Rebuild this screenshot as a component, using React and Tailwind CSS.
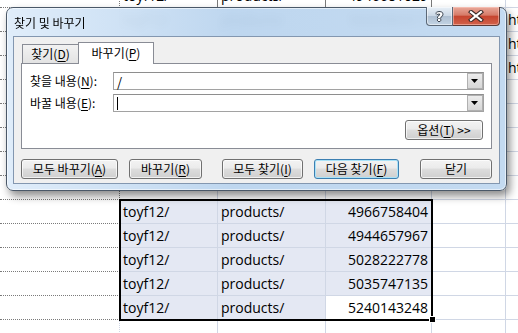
import React from 'react';

const rows = [
  { b: 'toyf12/', c: 'products/', d: '4946681029', f: '' },
  { b: 'toyf12/', c: 'products/', d: '5026384417', f: 'https://' },
  { b: 'toyf12/', c: 'products/', d: '4988125630', f: 'https://' },
  { b: 'toyf12/', c: 'products/', d: '5012774185', f: 'https://' },
  { b: '', c: '', d: '', f: '' },
  { b: '', c: '', d: '', f: '' },
  { b: '', c: '', d: '', f: '' },
  { b: '', c: '', d: '', f: '' },
  { b: '', c: '', d: '', f: '' },
  { b: 'toyf12/', c: 'products/', d: '4966758404', f: '', sel: true },
  { b: 'toyf12/', c: 'products/', d: '4944657967', f: '', sel: true },
  { b: 'toyf12/', c: 'products/', d: '5028222778', f: '', sel: true },
  { b: 'toyf12/', c: 'products/', d: '5035747135', f: '', sel: true },
  { b: 'toyf12/', c: 'products/', d: '5240143248', f: '', sel: true, last: true },
  { b: '', c: '', d: '', f: '' },
];

const U = ({ children }) => <span className="underline underline-offset-[2px]">{children}</span>;

const Btn = ({ className = '', focus, children }) => (
  <div
    className={`flex h-[20px] items-center justify-center whitespace-nowrap rounded-[3px] border bg-[linear-gradient(#f3f3f3_0%,#ebebeb_45%,#dddddd_50%,#cfcfcf_100%)] text-[12px] leading-none ${
      focus
        ? 'border-[#3c7fb1] shadow-[inset_0_0_0_1px_#a9e2f8]'
        : 'border-[#707070] shadow-[inset_0_0_0_1px_rgba(255,255,255,0.7)]'
    } ${className}`}
  >
    {children}
  </div>
);

const Combo = ({ children }) => (
  <div className="flex h-[18px] w-[371px] items-center border border-[#a2a2a2] border-t-[#8e8e8e] bg-white">
    <div className="flex-1 pl-[3px] text-[13px] leading-none">{children}</div>
    <div className="flex h-[16px] w-[16px] items-center justify-center border border-[#b0b0b0] bg-[linear-gradient(#ececec,#d6d6d6)]">
      <svg width="8" height="5" viewBox="0 0 8 5">
        <path d="M0 0 H7 L3.5 4 Z" fill="#000" />
      </svg>
    </div>
  </div>
);

export default function App() {
  return (
    <div className="relative h-[333px] w-[518px] overflow-hidden bg-white font-['Open_Sans',sans-serif] text-[14px] text-black">
      {/* spreadsheet */}
      <div className="mt-[-16px] flex flex-col">
        {rows.map((r, i) => {
          const top = i === 0;
          const above = i < 9;
          const selBg = r.sel ? 'bg-[#e4e8f3]' : 'bg-white';
          return (
            <div key={i} className="flex h-[24px] leading-[24px]">
              <div
                className={`w-[120px] shrink-0 border-b border-r border-b-[#7a7a7a] border-dotted ${
                  above ? 'border-r-[#7a7a7a]' : 'border-r-[#d0d7e5] border-r-solid'
                }`}
              />
              <div
                className={`w-[98px] shrink-0 border-b border-r border-[#d0d7e5] pl-[3px] ${selBg} ${
                  top ? 'border-r-[#7a7a7a] border-r-dotted' : ''
                }`}
              >
                {r.b}
              </div>
              <div
                className={`w-[108px] shrink-0 border-b border-r border-[#d0d7e5] pl-[3px] ${selBg} ${
                  top ? 'border-r-[#7a7a7a] border-r-dotted' : ''
                }`}
              >
                {r.c}
              </div>
              <div
                className={`w-[106px] shrink-0 border-b border-r border-[#d0d7e5] pr-[3px] text-right ${
                  r.last ? 'bg-white' : selBg
                } ${top ? 'border-r-[#7a7a7a] border-r-dotted' : ''}`}
              >
                {r.d}
              </div>
              <div className="w-[74px] shrink-0 border-b border-r border-[#d0d7e5]" />
              <div className="flex-1 overflow-hidden whitespace-nowrap border-b border-[#d0d7e5] pl-[2px]">{r.f}</div>
            </div>
          );
        })}
      </div>

      {/* selection outline + fill handle */}
      <div className="pointer-events-none absolute left-[119px] top-[199px] h-[122px] w-[314px] border-2 border-black" />
      <div className="absolute left-[430px] top-[317px] h-[5px] w-[5px] bg-black outline outline-1 outline-white" />

      {/* dialog */}
      <div className="absolute left-[6px] top-[7px] flex h-[184px] w-[501px] flex-col rounded-[7px] border border-[#4a5868] bg-[linear-gradient(90deg,rgba(222,236,250,0.94),rgba(186,212,238,0.94)_45%,rgba(192,216,240,0.94))] px-[6px] pb-[6px] font-['Noto_Sans_CJK_KR',sans-serif] shadow-[3px_5px_9px_rgba(0,0,0,0.45),inset_0_0_0_1px_rgba(255,255,255,0.55)] backdrop-blur-[4px]">
        <div className="flex h-[28px] items-start justify-between">
          <div className="self-center pl-[1px] pt-[1px] text-[12px] leading-none text-black">찾기 및 바꾸기</div>
          <div className="-mt-px flex h-[19px]">
            <div className="flex w-[27px] items-center justify-center rounded-bl-[4px] border border-t-0 border-[#5b6877] bg-[linear-gradient(#e9f0f7,#c9d7e5_50%,#aebfd1_51%,#c2d3e4)] shadow-[inset_0_0_0_1px_rgba(255,255,255,0.5)]">
              <span className="font-['DejaVu_Sans',sans-serif] text-[13px] font-bold leading-none text-white [text-shadow:1px_0_#3b4450,-1px_0_#3b4450,0_1px_#3b4450,0_-1px_#3b4450]">
                ?
              </span>
            </div>
            <div className="flex w-[47px] items-center justify-center rounded-br-[4px] border border-l-0 border-t-0 border-[#5b3a36] bg-[linear-gradient(#e9a99b,#d67b68_45%,#c6452f_52%,#d2624b)] shadow-[inset_0_0_0_1px_rgba(255,210,200,0.5)]">
              <svg width="16" height="12" viewBox="0 0 16 12">
                <path d="M3 2 L13 10 M13 2 L3 10" stroke="#3a2a28" strokeWidth="4.2" strokeLinecap="square" />
                <path d="M3 2 L13 10 M13 2 L3 10" stroke="#ffffff" strokeWidth="2.2" strokeLinecap="square" />
              </svg>
            </div>
          </div>
        </div>

        <div className="flex flex-1 flex-col border border-[#8397b0] bg-[#f0f0f0] px-[7px] pt-[5px]">
          {/* tabs */}
          <div className="flex h-[21px] items-end">
            <div className="ml-px flex h-[19px] w-[57px] items-center justify-center border border-b-0 border-[#898c95] bg-[linear-gradient(#f2f2f2,#e3e3e3)] text-[12px] leading-none">
              찾기(<U>D</U>)
            </div>
            <div className="relative z-10 -mb-px -ml-px flex h-[22px] w-[76px] items-center justify-center border border-b-0 border-[#898c95] bg-white pb-[1px] text-[12px] leading-none">
              바꾸기(<U>P</U>)
            </div>
          </div>

          <div className="flex h-[86px] flex-col border border-[#898c95] bg-white pl-[8px] pr-[7px] pt-[8px] text-[12px] leading-none">
            <div className="flex items-center">
              <div className="w-[83px]">
                찾을 내용(<U>N</U>):
              </div>
              <Combo>/</Combo>
            </div>
            <div className="mt-[4px] flex items-center">
              <div className="w-[83px]">
                바꿀 내용(<U>E</U>):
              </div>
              <Combo>
                <span className="inline-block h-[13px] w-px bg-black align-middle" />
              </Combo>
            </div>
            <div className="mt-[8px] flex justify-end pr-px">
              <Btn className="w-[78px]">
                옵션(<U>T</U>)&nbsp;&gt;&gt;
              </Btn>
            </div>
          </div>

          <div className="mt-[10px] flex">
            <Btn className="w-[97px]">
              모두 바꾸기(<U>A</U>)
            </Btn>
            <Btn className="ml-[11px] w-[73px]">
              바꾸기(<U>R</U>)
            </Btn>
            <Btn className="ml-[20px] w-[81px]">
              모두 찾기(<U>I</U>)
            </Btn>
            <Btn focus className="ml-[11px] w-[85px]">
              다음 찾기(<U>F</U>)
            </Btn>
            <Btn className="ml-[21px] w-[72px]">닫기</Btn>
          </div>
        </div>
      </div>
    </div>
  );
}
